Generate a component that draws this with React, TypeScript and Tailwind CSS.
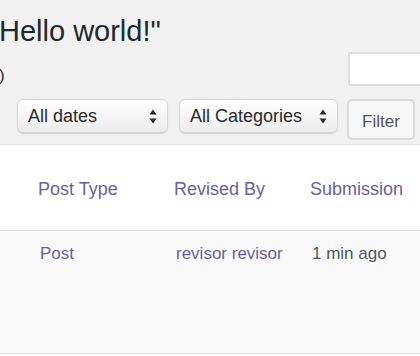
import React from 'react'

const SelectArrows = () => (
  <svg width="8" height="15" viewBox="0 0 8 15" className="shrink-0">
    <path d="M4 0.5 L7.5 5.5 L0.5 5.5 Z" fill="#2b2b2b" />
    <path d="M4 14.5 L7.5 9.5 L0.5 9.5 Z" fill="#2b2b2b" />
  </svg>
)

interface SelectProps {
  label: string
  width: string
}

const FakeSelect: React.FC<SelectProps> = ({ label, width }) => (
  <div
    className={`${width} h-[34px] flex items-center justify-between pl-[10px] pr-[10px] rounded-[6px] border border-[#d6d6d6] bg-gradient-to-b from-[#ffffff] to-[#ececec] shadow-[0_1px_1px_rgba(0,0,0,0.12)] text-[18px] text-[#2a2a2a]`}
  >
    <span>{label}</span>
    <SelectArrows />
  </div>
)

export default function App() {
  return (
    <div
      className="w-[420px] h-[356px] overflow-hidden bg-[#f1f1f1] flex flex-col"
      style={{ fontFamily: '"Liberation Sans", Arial, sans-serif' }}
    >
      <div className="pt-[12px] h-[52px]">
        <h1 className="-ml-[1px] text-[29px] leading-[38px] text-[#23282d] whitespace-nowrap">
          Hello world!"
        </h1>
      </div>

      <div className="flex items-end justify-between h-[34px]">
        <span className="-ml-[1px] text-[17px] leading-[20px] text-[#23282d]">)</span>
        <div className="w-[80px] h-[34px] -mr-[8px] bg-white border-2 border-[#dedede] rounded-[2px]" />
      </div>

      <div className="flex items-start pl-[17px] mt-[13px] h-[45px]">
        <FakeSelect label="All dates" width="w-[151px]" />
        <div className="ml-[11px]">
          <FakeSelect label="All Categories" width="w-[159px]" />
        </div>
        <button className="ml-[9px] w-[68px] h-[41px] rounded-[5px] border-2 border-[#d9d9d9] bg-[#f7f7f7] text-[17px] text-[#555] pt-[4px]">
          Filter
        </button>
      </div>

      <div className="border-t border-[#e2e2e2] bg-white flex-1 flex flex-col">
        <div className="h-[85px] flex items-center text-[18px] text-[#6a5f9f] pt-[4px]">
          <span className="ml-[38px] w-[136px]">Post Type</span>
          <span className="w-[136px]">Revised By</span>
          <span>Submission</span>
        </div>
        <div className="border-t border-[#e0e0e0] bg-[#f9f9f9] h-[124px] border-b">
          <div className="flex items-center h-[46px] text-[17px]">
            <span className="ml-[40px] w-[136px] text-[#6a5f9f]">Post</span>
            <span className="w-[136px] text-[#6a5f9f]">revisor revisor</span>
            <span className="text-[#50575e]">1 min ago</span>
          </div>
        </div>
      </div>
    </div>
  )
}
